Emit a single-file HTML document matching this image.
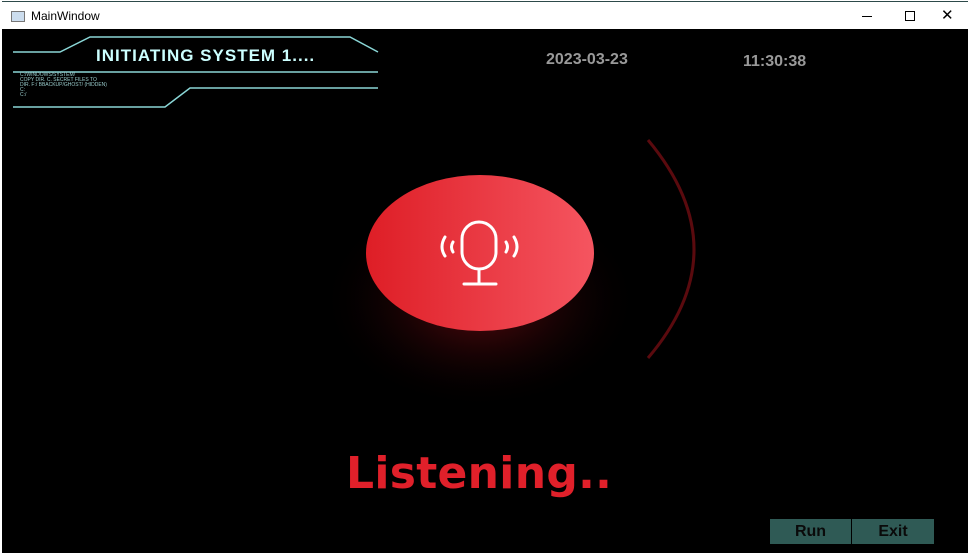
<!DOCTYPE html>
<html><head><style>
body{margin:0;width:973px;height:557px;background:#fff;position:relative;overflow:hidden;font-family:"Liberation Sans",sans-serif}
.win{position:absolute;left:2px;top:1px;width:966px;height:552px;border-top:1px solid #2d4a4a;background:#fff}
.bar{position:absolute;left:0;top:0;width:966px;height:28px;background:#fff}
.main{position:absolute;left:2px;top:29px;width:966px;height:524px;background:#000}
.t{position:absolute;color:#999;font-weight:bold;font-size:16px}
.btn{position:absolute;top:519px;height:25px;background:#2f5a55;color:#0a0a0a;font-weight:bold;font-size:16px;text-align:center;line-height:25px}
</style></head><body>
<div class="win"><div class="bar">
<div style="position:absolute;left:9px;top:9px;width:12px;height:9px;border:1px solid #777;background:#cde"></div>
<div style="position:absolute;left:29px;top:7px;font-size:12px;color:#000">MainWindow</div>
<div style="position:absolute;left:860px;top:14px;width:10px;height:1px;background:#000"></div>
<div style="position:absolute;left:903px;top:9px;width:8px;height:8px;border:1px solid #000"></div>
<div style="position:absolute;left:939px;top:4px;font-size:15px;color:#000">✕</div>
</div></div>
<div class="main"></div>
<svg style="position:absolute;left:0;top:0" width="973" height="557">
<defs>
<radialGradient id="glow" cx="0.5" cy="0.5" r="0.5"><stop offset="0" stop-color="#a01018" stop-opacity=".6"/><stop offset="1" stop-color="#000" stop-opacity="0"/></radialGradient>
<linearGradient id="rg" x1="0" x2="1"><stop offset="0" stop-color="#de1e26"/><stop offset="1" stop-color="#f55560"/></linearGradient>
</defs>
<g stroke="#9ee" stroke-width="1.5" fill="none" opacity=".9">
<polyline points="13,52 60,52 90,37 350,37 378,52"/>
<polyline points="13,72 378,72"/>
<polyline points="13,107 165,107 190,88 378,88"/>
</g>
<text x="96" y="61" fill="#cff" font-size="17" font-weight="bold" letter-spacing="1" font-family="Liberation Sans">INITIATING SYSTEM 1....</text>
<g fill="#9cc" font-size="5" font-family="Liberation Sans">
<text x="20" y="76">C:/WINDOWS/SYSTEM/</text><text x="20" y="81">COPY DIR. C. SECRET FILES TO</text><text x="20" y="86">DIR. F:/ BBACKUP/GHOST/ (HIDDEN)</text><text x="20" y="91">C:</text><text x="20" y="96">C:/</text></g>
<ellipse cx="480" cy="300" rx="160" ry="110" fill="url(#glow)"/>
<path d="M648,140 Q740,250 648,358" stroke="#5a0a0e" stroke-width="3" fill="none"/>
<ellipse cx="480" cy="253" rx="114" ry="78" fill="url(#rg)"/>
<g stroke="#fff" stroke-width="3" fill="none" stroke-linecap="round">
<rect x="462" y="222" width="34" height="47" rx="17"/>
<line x1="479" y1="270" x2="479" y2="283"/>
<line x1="464" y1="284" x2="496" y2="284"/>
<path d="M445,237 Q439,247 445,256"/><path d="M453,242 Q450,247 453,252"/>
<path d="M514,237 Q520,247 514,256"/><path d="M506,242 Q509,247 506,252"/>
</g>
</svg>
<div class="t" style="left:546px;top:51px">2023-03-23</div>
<div class="t" style="left:743px;top:53px">11:30:38</div>
<div style="position:absolute;left:346px;top:448px;color:#e0202a;font-size:44px;font-weight:bold;letter-spacing:0.3px;font-family:'DejaVu Sans',sans-serif">Listening..</div>
<div class="btn" style="left:770px;width:81px">Run</div>
<div class="btn" style="left:852px;width:82px">Exit</div>
</body></html>
